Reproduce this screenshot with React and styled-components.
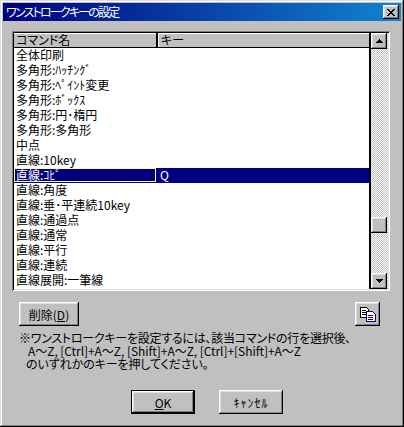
import React from "react";
import styled, { createGlobalStyle, css } from "styled-components";

const commands = [
  "全体印刷",
  "多角形:ﾊｯﾁﾝｸﾞ",
  "多角形:ﾍﾟｲﾝﾄ変更",
  "多角形:ﾎﾞｯｸｽ",
  "多角形:円･楕円",
  "多角形:多角形",
  "中点",
  "直線:10key",
  "直線:ｺﾋﾟ",
  "直線:角度",
  "直線:垂･平連続10key",
  "直線:通過点",
  "直線:通常",
  "直線:平行",
  "直線:連続",
  "直線展開:一筆線",
];
const selectedCommand = "直線:ｺﾋﾟ";

const GlobalStyle = createGlobalStyle`
  html, body {
    margin: 0;
    padding: 0;
    background: #c0c0c0;
  }
  * {
    box-sizing: border-box;
  }
`;

const raised = css`
  box-shadow:
    inset -1px -1px 0 #000,
    inset 1px 1px 0 #fff,
    inset -2px -2px 0 #808080,
    inset 2px 2px 0 #dfdfdf;
`;

const Window = styled.div`
  width: 404px;
  height: 427px;
  padding: 3px;
  background: #c0c0c0;
  font-family: "Noto Sans CJK JP", "Liberation Sans", sans-serif;
  font-feature-settings: "palt";
  font-size: 12px;
  color: #000;
  overflow: hidden;
  box-shadow:
    inset -1px -1px 0 #000,
    inset 1px 1px 0 #dfdfdf,
    inset -2px -2px 0 #808080,
    inset 2px 2px 0 #fff;
`;

const TitleBar = styled.div`
  height: 18px;
  display: flex;
  align-items: center;
  justify-content: space-between;
  padding: 0 2px 0 3px;
  background: linear-gradient(90deg, #000080, #1084d0);
`;

const TitleText = styled.span`
  color: #fff;
  font-size: 12px;
  letter-spacing: -1.8px;
  line-height: 18px;
`;

const CloseButton = styled.button`
  width: 16px;
  height: 14px;
  padding: 0;
  border: 0;
  background: #c0c0c0;
  display: flex;
  align-items: center;
  justify-content: center;
  ${raised}
`;

const Body = styled.div`
  padding: 10px 11px 0 9px;
`;

const ListFrame = styled.div`
  height: 260px;
  display: flex;
  padding: 2px;
  background: #fff;
  box-shadow:
    inset 1px 1px 0 #808080,
    inset -1px -1px 0 #fff,
    inset 2px 2px 0 #000,
    inset -2px -2px 0 #dfdfdf;
`;

const Table = styled.div`
  flex: 1;
  min-width: 0;
  overflow: hidden;
  border-right: 2px solid #000;
`;

const HeaderRow = styled.div`
  display: flex;
  height: 15px;
  background: #c0c0c0;
  border-bottom: 1px solid #000;
`;

const HeaderCell = styled.div`
  width: ${(p) => (p.$first ? "144px" : "auto")};
  flex: ${(p) => (p.$first ? "none" : "1")};
  padding-left: 2px;
  line-height: 14px;
  border-right: ${(p) => (p.$first ? "2px solid #000" : "none")};
  border-left: ${(p) => (p.$first ? "none" : "1px solid #fff")};
  box-shadow: inset 0 1px 0 #fff;
`;

const Row = styled.div`
  display: flex;
  height: 15px;
  line-height: 13px;
  font-feature-settings: normal;
  background: ${(p) => (p.$selected ? "#000080" : "#fff")};
  color: ${(p) => (p.$selected ? "#fff" : "#000")};
`;

const NameCell = styled.div`
  width: 142px;
  height: ${(p) => (p.$focus ? "14px" : "auto")};
  white-space: nowrap;
  border: ${(p) => (p.$focus ? "1px solid #ffffa0" : "none")};
  line-height: ${(p) => (p.$focus ? "11px" : "13px")};
  padding-left: ${(p) => (p.$focus ? "1px" : "2px")};
`;

const KeyCell = styled.div`
  padding-left: 2px;
  margin-left: 2px;
`;

const Scrollbar = styled.div`
  width: 17px;
  display: flex;
  flex-direction: column;
  background-color: #fff;
  background-image: repeating-conic-gradient(#c0c0c0 0% 25%, #fff 0% 50%);
  background-size: 2px 2px;
`;

const ScrollButton = styled.div`
  width: 16px;
  height: 16px;
  flex: none;
  background: #c0c0c0;
  display: flex;
  align-items: center;
  justify-content: center;
  ${raised}
`;

const Track = styled.div`
  flex: 1;
  position: relative;
`;

const Thumb = styled.div`
  position: absolute;
  left: 0;
  top: 168px;
  width: 16px;
  height: 16px;
  background: #c0c0c0;
  ${raised}
`;

const ToolRow = styled.div`
  display: flex;
  justify-content: space-between;
  margin-top: 11px;
  padding: 0 10px 0 7px;
`;

const ToolButton = styled.button`
  width: ${(p) => p.$width};
  height: 24px;
  padding: 0;
  border: 0;
  background: #c0c0c0;
  font: inherit;
  color: #000;
  display: flex;
  align-items: center;
  justify-content: center;
  ${raised}
`;

const Note = styled.div`
  margin-top: 5px;
  padding-left: 7px;
  line-height: 13px;
  white-space: nowrap;
`;

const NoteLine = styled.div`
  padding-left: ${(p) => p.$indent || 0}px;
  letter-spacing: ${(p) => p.$spacing || 0}px;
`;

const ActionRow = styled.div`
  display: flex;
  gap: 24px;
  margin-top: 20px;
  padding-left: 119px;
`;

const ActionButton = styled.button`
  width: 64px;
  height: 24px;
  padding: 0;
  border: ${(p) => (p.$primary ? "1px solid #000" : "0")};
  background: #c0c0c0;
  font: inherit;
  font-feature-settings: normal;
  letter-spacing: ${(p) => (p.$primary ? "0" : "1px")};
  color: #000;
  display: flex;
  align-items: center;
  justify-content: center;
  ${raised}
`;

const Key = styled.span`
  text-decoration: underline;
`;

const CloseIcon = () => (
  <svg width="8" height="7" viewBox="0 0 8 7" shapeRendering="crispEdges">
    <path
      d="M0 0h2v1h1v1h2V1h1V0h2v1H7v1H6v1H5v1h1v1h1v1h1v1H6V6H5V5H3v1H2v1H0V6h1V5h1V4h1V3H2V2H1V1H0z"
      fill="#000"
    />
  </svg>
);

const Arrow = ({ down }) => (
  <svg width="7" height="4" viewBox="0 0 7 4" shapeRendering="crispEdges">
    <path d={down ? "M0 0h7v1H6v1H5v1H4v1H3V3H2V2H1V1H0z" : "M3 0h1v1h1v1h1v1h1v1H0V3h1V2h1V1h1z"} fill="#000" />
  </svg>
);

const CopyIcon = () => (
  <svg width="16" height="15" viewBox="0 0 16 15" shapeRendering="crispEdges">
    <path d="M.5.5h6l2 2v8h-8z" fill="#fff" stroke="#000" />
    <path d="M2 3h4v1H2zM2 5h5v1H2zM2 7h5v1H2z" fill="#000" />
    <path d="M6.5 4.5h6l2.5 2.5v7.5H6.5z" fill="#fff" stroke="#000080" />
    <path d="M8 8h5v1H8zM8 10h5v1H8zM8 12h5v1H8z" fill="#000080" />
  </svg>
);

export default function App() {
  return (
    <Window>
      <GlobalStyle />
      <TitleBar>
        <TitleText>ワンストロークキーの設定</TitleText>
        <CloseButton>
          <CloseIcon />
        </CloseButton>
      </TitleBar>
      <Body>
        <ListFrame>
          <Table>
            <HeaderRow>
              <HeaderCell $first>コマンド名</HeaderCell>
              <HeaderCell>キー</HeaderCell>
            </HeaderRow>
            {commands.map((name) => {
              const selected = name === selectedCommand;
              return (
                <Row key={name} $selected={selected}>
                  <NameCell $focus={selected}>{name}</NameCell>
                  {selected && <KeyCell>Q</KeyCell>}
                </Row>
              );
            })}
          </Table>
          <Scrollbar>
            <ScrollButton>
              <Arrow />
            </ScrollButton>
            <Track>
              <Thumb />
            </Track>
            <ScrollButton>
              <Arrow down />
            </ScrollButton>
          </Scrollbar>
        </ListFrame>
        <ToolRow>
          <ToolButton $width="60px">
            <span>
              削除(<Key>D</Key>)
            </span>
          </ToolButton>
          <ToolButton $width="25px">
            <CopyIcon />
          </ToolButton>
        </ToolRow>
        <Note>
          <NoteLine $spacing={-0.25}>※ワンストロークキーを設定するには、該当コマンドの行を選択後、</NoteLine>
          <NoteLine $indent={9} $spacing={-0.05}>A～Z, [Ctrl]+A～Z, [Shift]+A～Z, [Ctrl]+[Shift]+A～Z</NoteLine>
          <NoteLine $indent={7} $spacing={-0.1}>のいずれかのキーを押してください。</NoteLine>
        </Note>
        <ActionRow>
          <ActionButton $primary>
            <span>
              <Key>O</Key>K
            </span>
          </ActionButton>
          <ActionButton>ｷｬﾝｾﾙ</ActionButton>
        </ActionRow>
      </Body>
    </Window>
  );
}
